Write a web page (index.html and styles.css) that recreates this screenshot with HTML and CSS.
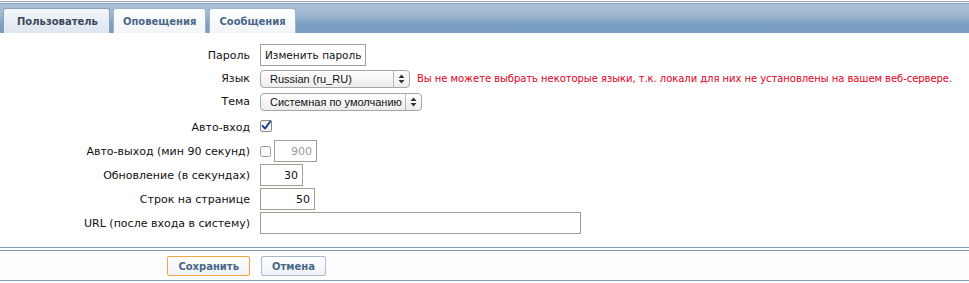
FILE: index.html
```html
<!DOCTYPE html>
<html lang="ru">
<head>
  <meta charset="UTF-8" />
  <title>Профиль пользователя</title>
  <link rel="stylesheet" href="styles.css">
</head>
<body>
  <div class="topline"></div>

  <div class="tabbar">
    <div class="tab active">Пользователь</div>
    <div class="tab">Оповещения</div>
    <div class="tab">Сообщения</div>
  </div>

  <form class="form">
    <label class="label">Пароль</label>
    <div class="field"><button type="button" class="plain-btn">Изменить пароль</button></div>

    <label class="label">Язык</label>
    <div class="field">
      <div class="select select-lang">
        <span class="select-text">Russian (ru_RU)</span>
        <span class="select-arrows">
          <svg width="7" height="10" viewBox="0 0 7 10"><path d="M3.5 0.5 L6.5 4 L0.5 4 Z M3.5 9.5 L6.5 6 L0.5 6 Z" fill="#333"/></svg>
        </span>
      </div>
      <span class="error">Вы не можете выбрать некоторые языки, т.к. локали для них не установлены на вашем веб-сервере.</span>
    </div>

    <label class="label">Тема</label>
    <div class="field">
      <div class="select select-theme">
        <span class="select-text">Системная по умолчанию</span>
        <span class="select-arrows">
          <svg width="7" height="10" viewBox="0 0 7 10"><path d="M3.5 0.5 L6.5 4 L0.5 4 Z M3.5 9.5 L6.5 6 L0.5 6 Z" fill="#333"/></svg>
        </span>
      </div>
    </div>

    <label class="label label-low">Авто-вход</label>
    <div class="field">
      <svg class="checkbox" width="12" height="12" viewBox="0 0 12 12">
        <rect x="0.5" y="0.5" width="11" height="11" rx="1.5" fill="#f4f4f4" stroke="#8c8c8c"/>
        <path d="M2.6 5.8 L5 8.6 L10.4 1.2" fill="none" stroke="#1e3f8c" stroke-width="1.9" stroke-linecap="round" stroke-linejoin="round"/>
      </svg>
    </div>

    <label class="label">Авто-выход (мин 90 секунд)</label>
    <div class="field">
      <svg class="checkbox" width="11" height="11" viewBox="0 0 11 11">
        <rect x="0.5" y="0.5" width="10" height="10" rx="2" fill="#fbfbfb" stroke="#9a9a9a"/>
      </svg>
      <input class="text-input num small disabled" type="text" value="900" disabled>
    </div>

    <label class="label">Обновление (в секундах)</label>
    <div class="field"><input class="text-input num small" type="text" value="30"></div>

    <label class="label">Строк на странице</label>
    <div class="field"><input class="text-input num medium" type="text" value="50"></div>

    <label class="label">URL (после входа в систему)</label>
    <div class="field"><input class="text-input url" type="text" value=""></div>
  </form>

  <div class="footer">
    <div class="footer-inner">
      <div class="footer-save"><button type="button" class="action-btn save">Сохранить</button></div>
      <div><button type="button" class="action-btn">Отмена</button></div>
    </div>
  </div>
</body>
</html>
```

FILE: styles.css
```css
body {
  margin: 0;
  padding-top: 1px;
  background-color: #ffffff;
  font-family: 'DejaVu Sans', Verdana, sans-serif;
  font-size: 11px;
  color: #111;
}

.topline {
  border-top: 1px solid #98a3b0;
  margin-bottom: 1px;
}

.tabbar {
  height: 29px;
  margin-top: 1px;
  border-top: 1px solid #86a2c0;
  background: linear-gradient(#aec3d9 0%, #9db6d0 40%, #7b9fc4 70%, #789dc3 100%);
  display: flex;
  align-items: flex-end;
  padding-left: 3px;
  gap: 3px;
}

.tab {
  height: 25px;
  box-sizing: border-box;
  padding: 0 9px;
  display: flex;
  align-items: center;
  font-size: 10px;
  font-weight: bold;
  color: #4a6788;
  background: linear-gradient(#ffffff, #f1f4f8);
  border: 1px solid #9fb4cb;
  border-bottom: none;
  border-radius: 3px 3px 0 0;
}

.tab.active {
  color: #3b4a5a;
  padding: 0 11px 0 13px;
  background: linear-gradient(#f3f6f9, #dde6ef);
  border-color: #8ea4bc;
}

.form {
  display: grid;
  grid-template-columns: 250px 1fr;
  grid-template-rows: 24px 23px 23px 26px 24px 24px 24px 24px;
  column-gap: 10px;
  padding-top: 10px;
}

.label {
  text-align: right;
  align-self: center;
  color: #111;
}

.label-low {
  padding-top: 3px;
}

.field {
  display: flex;
  align-items: center;
  gap: 7px;
}

.plain-btn {
  height: 22px;
  padding: 0 4px;
  font-family: inherit;
  font-size: 10.5px;
  color: #111;
  background-color: #fff;
  border: 1px solid #a29f90;
  border-radius: 0;
}

.select {
  height: 18px;
  box-sizing: border-box;
  display: flex;
  align-items: stretch;
  border: 1px solid #a6a6a6;
  border-radius: 4px;
  background: linear-gradient(#ffffff, #ececec);
  font-family: 'Liberation Sans', Arial, sans-serif;
  font-size: 11px;
}

.select-lang {
  width: 150px;
}

.select-theme {
  width: 162px;
  margin-top: 1px;
}

.select-text {
  flex: 1;
  padding-left: 9px;
  line-height: 16px;
  white-space: nowrap;
  overflow: hidden;
}

.select-arrows {
  width: 15px;
  border-left: 1px solid #b8b8b8;
  display: flex;
  align-items: center;
  justify-content: center;
}

.error {
  color: #e60022;
  font-size: 10px;
  letter-spacing: -0.05px;
  white-space: nowrap;
}

.checkbox {
  display: block;
}

.text-input {
  height: 22px;
  box-sizing: border-box;
  font-family: inherit;
  font-size: 11px;
  color: #111;
  background-color: #fff;
  border: 1px solid #a29f90;
  border-radius: 0;
  padding: 0 4px;
  margin: 0;
}

.text-input.num {
  text-align: right;
}

.text-input.small {
  width: 43px;
}

.text-input.medium {
  width: 55px;
}

.text-input.url {
  width: 321px;
}

.text-input.disabled {
  color: #9a9a9a;
  background-color: #fff;
  margin-left: -4px;
}

.footer {
  margin-top: 12px;
  border-top: 1px solid #7f9bb9;
}

.footer-inner {
  margin-top: 2px;
  border-top: 1px solid #7f9bb9;
  border-bottom: 1px solid #7f9bb9;
  background-color: #fdfdfd;
  display: grid;
  grid-template-columns: 250px 1fr;
  column-gap: 11px;
  padding: 5px 0 4px;
}

.footer-save {
  display: flex;
  justify-content: flex-end;
}

.action-btn {
  height: 20px;
  padding: 0 10px;
  font-family: inherit;
  font-size: 10px;
  font-weight: bold;
  color: #4a6788;
  background: linear-gradient(#ffffff, #eef2f6);
  border: 1px solid #a9bbce;
  border-radius: 2px;
}

.action-btn.save {
  border-color: #f5a443;
  min-width: 82px;
}
```
